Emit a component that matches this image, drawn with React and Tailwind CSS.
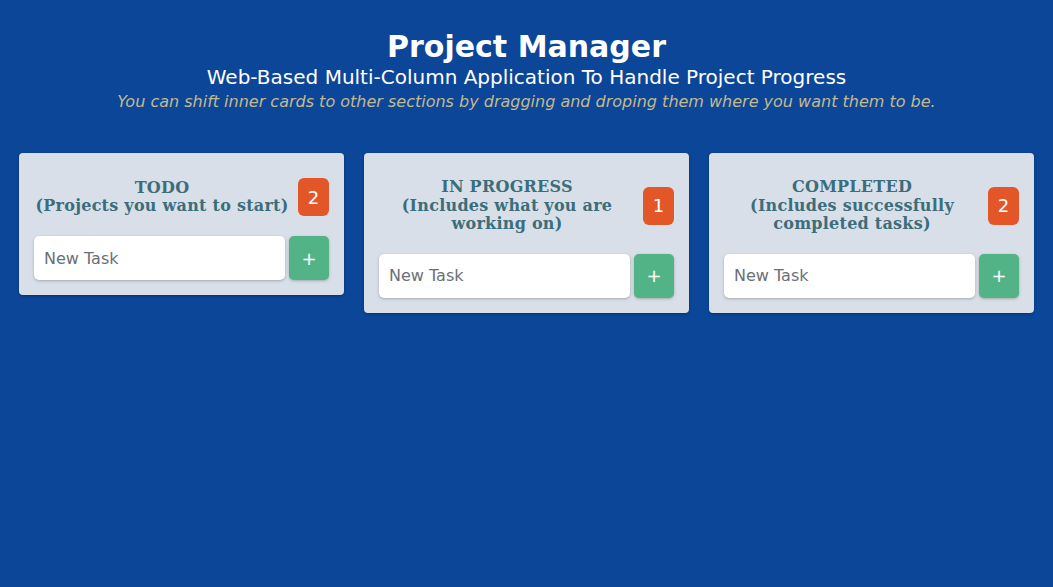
import React, { useState } from "react";

const COLUMNS = [
  { id: "todo", title: "TODO", note: "(Projects you want to start)", count: 2 },
  { id: "progress", title: "IN PROGRESS", note: "(Includes what you are working on)", count: 1 },
  { id: "done", title: "COMPLETED", note: "(Includes successfully completed tasks)", count: 2 },
];

function Column({ column }) {
  const [value, setValue] = useState("");

  return (
    <div className="flex-1 bg-[#d9dfe8] rounded-[4px] shadow-[0_1px_3px_rgba(0,0,0,0.3)] px-[15px] pt-[25px] pb-[15px]">
      {/* header */}
      <div className="flex items-center">
        <h2 className="flex-1 text-center text-[#3b6d7b] font-bold text-[16px] tracking-[0.25px] leading-[18.5px] font-['DejaVu_Serif',serif] mr-2">
          {column.title}
          <br />
          {column.note}
        </h2>
        <span className="w-[31px] h-[38px] flex items-center justify-center rounded-[6px] bg-[#e35627] text-white text-[18px] font-['DejaVu_Sans',sans-serif]">
          {column.count}
        </span>
      </div>

      {/* new task */}
      <div className="flex gap-1 mt-5">
        <input
          value={value}
          onChange={(e) => setValue(e.target.value)}
          placeholder="New Task"
          className="flex-1 min-w-0 h-[44px] bg-white rounded-[5px] px-[10px] text-[16px] text-gray-700 placeholder:text-[#6b6f78] shadow-[0_1px_3px_rgba(0,0,0,0.25)] outline-none font-['DejaVu_Sans',sans-serif]"
        />
        <button className="w-[40px] h-[44px] rounded-[5px] bg-[#52b386] text-white text-[18px] shadow-[0_1px_3px_rgba(0,0,0,0.25)] font-['DejaVu_Sans',sans-serif]">
          +
        </button>
      </div>
    </div>
  );
}

export default function App() {
  return (
    <div className="min-h-screen bg-[#0c4698] font-['DejaVu_Sans',sans-serif] pt-[30px] px-[19px]">
      <header className="text-center">
        <h1 className="text-white font-bold text-[30px] leading-[34px]">Project Manager</h1>
        <p className="text-white text-[20px] leading-[26px]">
          Web-Based Multi-Column Application To Handle Project Progress
        </p>
        <p className="italic text-[#c4b98d] text-[16px] leading-[24px]">
          You can shift inner cards to other sections by dragging and droping them where you want them to be.
        </p>
      </header>

      <div className="flex items-start gap-5 mt-[39px]">
        {COLUMNS.map((c) => (
          <Column key={c.id} column={c} />
        ))}
      </div>
    </div>
  );
}
